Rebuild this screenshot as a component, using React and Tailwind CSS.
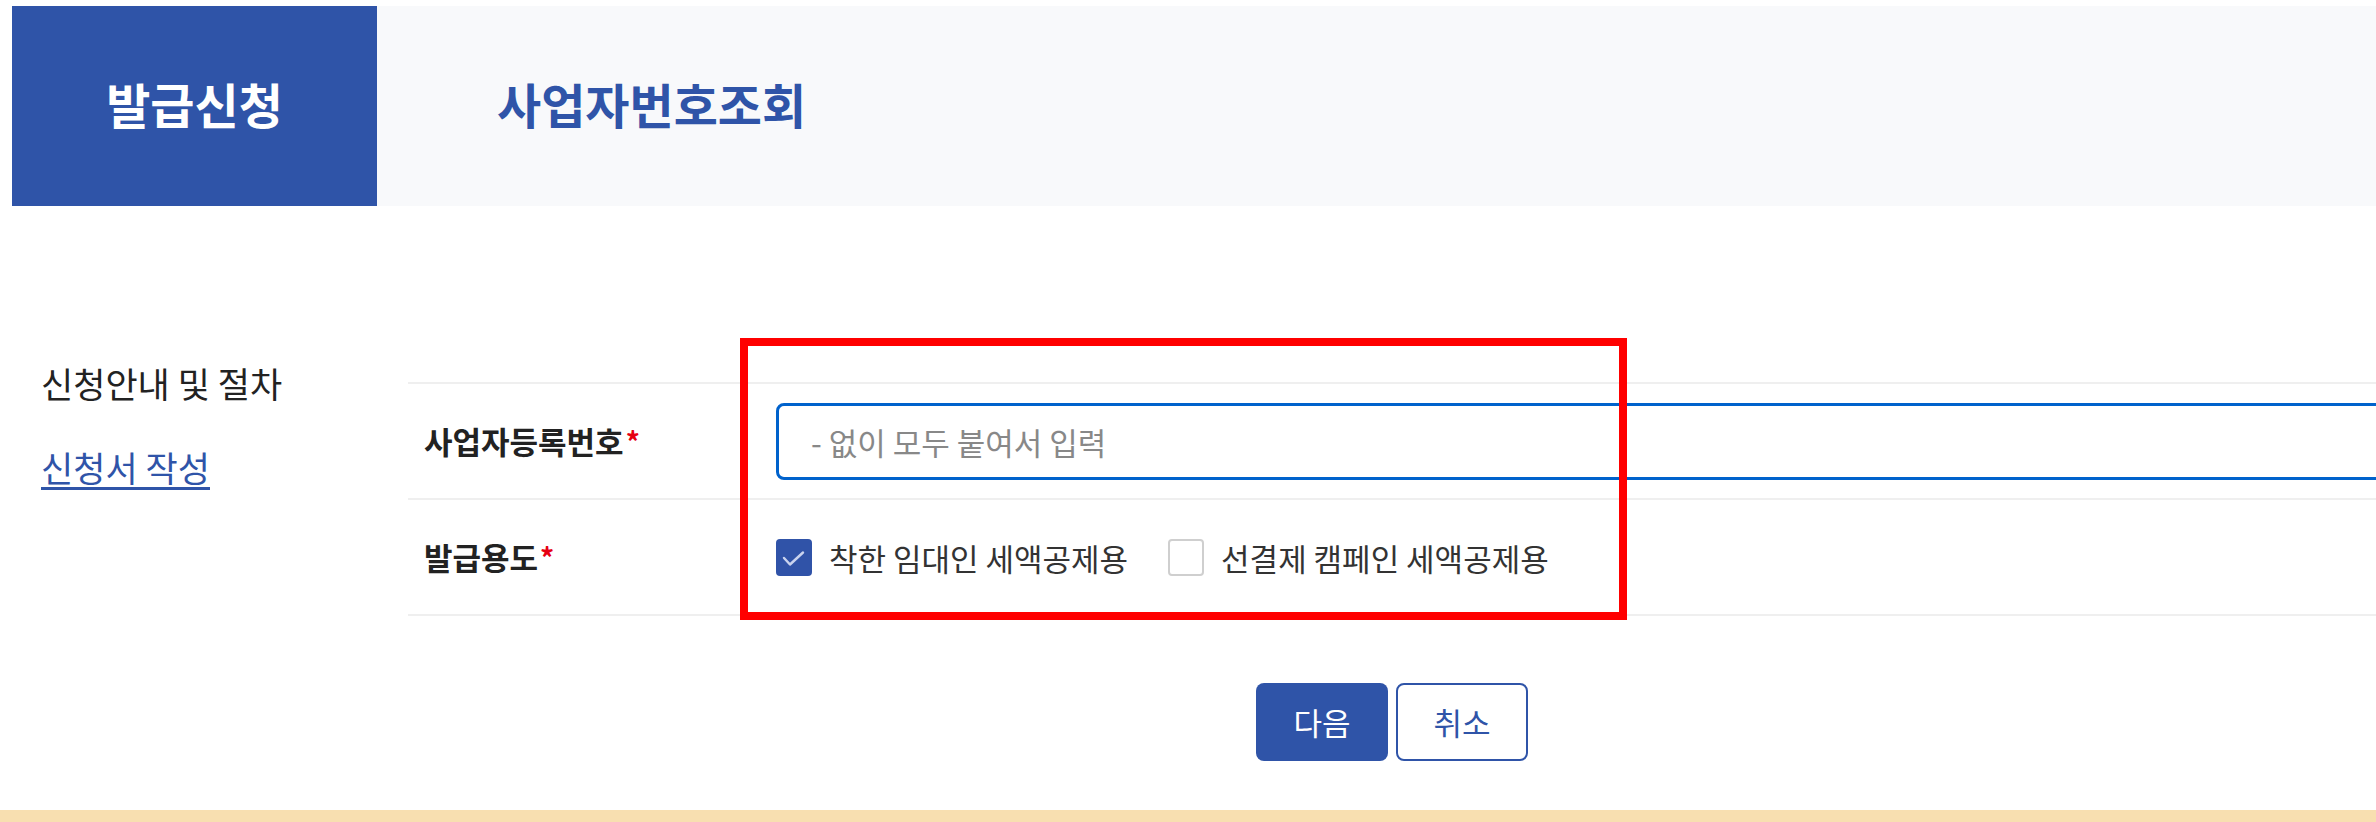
import React from "react";

const font = "font-['Noto_Sans_CJK_KR','Noto_Sans',sans-serif]";

const Check = ({ checked, label }) => (
  <label className="flex items-center gap-[17px]">
    <span
      className={`w-[36px] h-[37px] rounded-[4px] flex items-center justify-center ${
        checked ? "bg-[#3053a8]" : "bg-white border-2 border-[#cfcfcf]"
      }`}
    >
      {checked && (
        <svg width="36" height="37" viewBox="0 0 36 37" fill="none">
          <polyline points="8,19 14,25.5 27,13.5" stroke="#c9d3ee" strokeWidth="2.4" strokeLinecap="round" strokeLinejoin="round" />
        </svg>
      )}
    </span>
    <span className="text-[31px] text-[#333] leading-none">{label}</span>
  </label>
);

const Row = ({ label, children }) => (
  <div className="flex h-[116px] border-b-2 border-[#efefef]">
    <div className="w-[368px] shrink-0 pl-[16px] flex items-center text-[31px] font-bold text-[#222]">
      {label}
      <span className="text-[#e60012] ml-[2px] text-[28px]">*</span>
    </div>
    <div className="flex-1 min-w-0 flex items-center overflow-hidden">{children}</div>
  </div>
);

export default function App() {
  return (
    <div className={`relative w-[2376px] h-[822px] bg-white overflow-hidden flex flex-col ${font}`}>
      {/* top tabs */}
      <header className="mt-[6px] ml-[12px] h-[200px] flex">
        <div className="w-[365px] bg-[#2f54a8] flex items-center justify-center pb-[6px] text-white text-[48px] font-bold">
          발급신청
        </div>
        <div className="flex-1 bg-[#f8f9fb] flex items-center pl-[120px] pb-[6px] text-[#2f54a8] text-[48px] font-bold">
          사업자번호조회
        </div>
      </header>

      <div className="flex">
        <aside className="w-[408px] shrink-0 pl-[41px] pt-[157px] flex flex-col items-start">
          <p className="text-[35px] leading-[40px] text-[#222]">신청안내 및 절차</p>
          <a className="mt-[44px] text-[35px] leading-[40px] text-[#2f54a8] border-b-[3px] border-[#2f54a8]">
            신청서 작성
          </a>
        </aside>

        <main className="flex-1 min-w-0 overflow-hidden pt-[176px]">
          <div className="border-t-2 border-[#efefef]">
            <Row label="사업자등록번호">
              <input
                className="w-[1700px] shrink-0 h-[77px] border-[3px] border-[#0062cc] rounded-[8px] pl-[32px] text-[31px] outline-none placeholder:text-[#888]"
                placeholder="- 없이 모두 붙여서 입력"
              />
            </Row>
            <Row label="발급용도">
              <div className="flex items-center gap-[40px]">
                <Check checked label="착한 임대인 세액공제용" />
                <Check label="선결제 캠페인 세액공제용" />
              </div>
            </Row>
          </div>

          <div className="mt-[67px] flex justify-center gap-[8px]">
            <button className="w-[132px] h-[78px] rounded-[8px] bg-[#2f54a8] text-white text-[31px]">다음</button>
            <button className="w-[132px] h-[78px] rounded-[8px] border-2 border-[#2f54a8] bg-white text-[#2f54a8] text-[31px]">
              취소
            </button>
          </div>
        </main>
      </div>

      <div className="mt-auto h-[12px] bg-[#f8dfb0]" />

      {/* highlight annotation */}
      <div className="absolute left-[740px] top-[338px] w-[887px] h-[282px] border-[8px] border-[#ff0000] pointer-events-none" />
    </div>
  );
}
